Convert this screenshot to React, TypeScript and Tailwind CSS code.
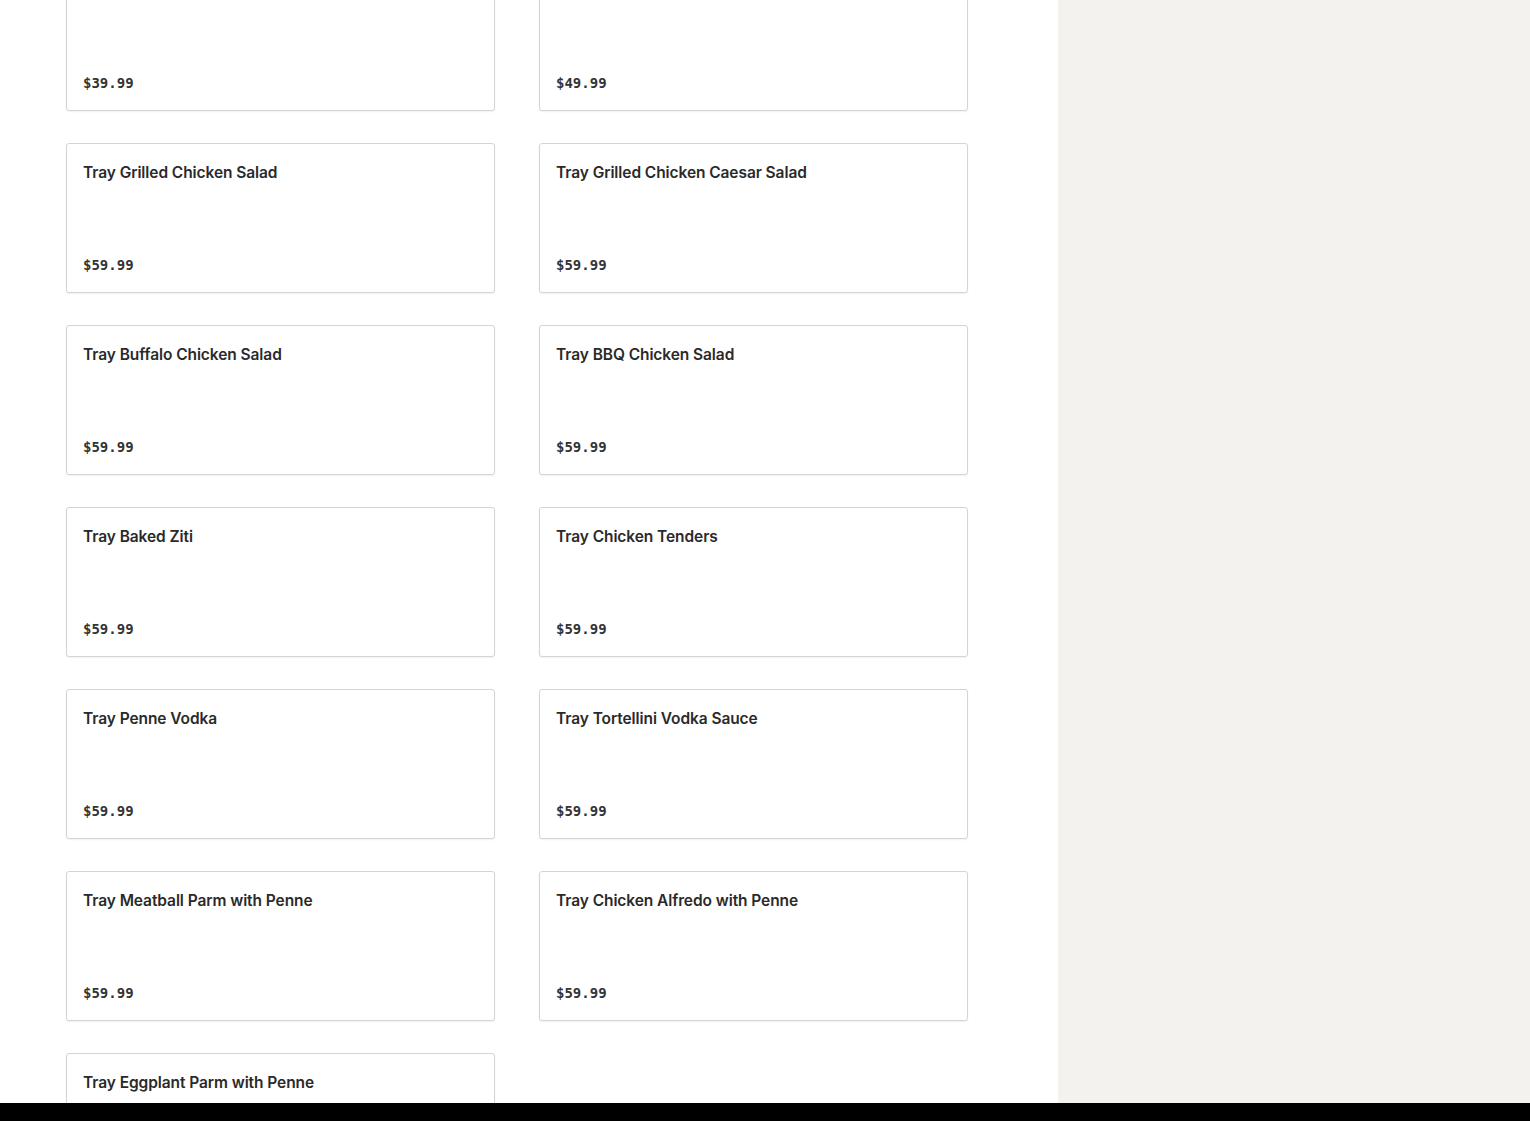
const items: { name: string; price: string }[] = [
  { name: "Tray Cheese Quesadilla", price: "$39.99" },
  { name: "Tray Chicken Quesadilla", price: "$49.99" },
  { name: "Tray Grilled Chicken Salad", price: "$59.99" },
  { name: "Tray Grilled Chicken Caesar Salad", price: "$59.99" },
  { name: "Tray Buffalo Chicken Salad", price: "$59.99" },
  { name: "Tray BBQ Chicken Salad", price: "$59.99" },
  { name: "Tray Baked Ziti", price: "$59.99" },
  { name: "Tray Chicken Tenders", price: "$59.99" },
  { name: "Tray Penne Vodka", price: "$59.99" },
  { name: "Tray Tortellini Vodka Sauce", price: "$59.99" },
  { name: "Tray Meatball Parm with Penne", price: "$59.99" },
  { name: "Tray Chicken Alfredo with Penne", price: "$59.99" },
  { name: "Tray Eggplant Parm with Penne", price: "$59.99" },
];

function MenuCard({ name, price }: { name: string; price: string }) {
  return (
    <div className="flex h-[150px] flex-col justify-between rounded-[3px] border border-[#d4d4d4] bg-white px-4 pt-[17px] pb-[17px] shadow-[0_1px_2px_rgba(0,0,0,0.06)]">
      <h3 className="text-[15.5px] leading-6 font-semibold tracking-[-0.08px] text-[#2a2a2a] [font-family:Inter,'Liberation_Sans',sans-serif]">
        {name}
      </h3>
      <p className="text-[14px] leading-5 font-bold text-[#333333] [font-family:'DejaVu_Sans_Mono',monospace]">
        {price}
      </p>
    </div>
  );
}

export default function App() {
  return (
    <div className="flex h-[1121px] w-[1530px] flex-col overflow-hidden bg-white">
      <div className="flex min-h-0 flex-1">
        <main className="w-[1058px] overflow-hidden bg-white">
          <div className="mt-[-39px] grid grid-cols-[429px_429px] gap-x-[44px] gap-y-[32px] pl-[66px]">
            {items.map((item) => (
              <MenuCard key={item.name} name={item.name} price={item.price} />
            ))}
          </div>
        </main>
        <aside className="flex-1 bg-[#f3f2ee]" />
      </div>
      <div className="h-[18px] bg-black" />
    </div>
  );
}
